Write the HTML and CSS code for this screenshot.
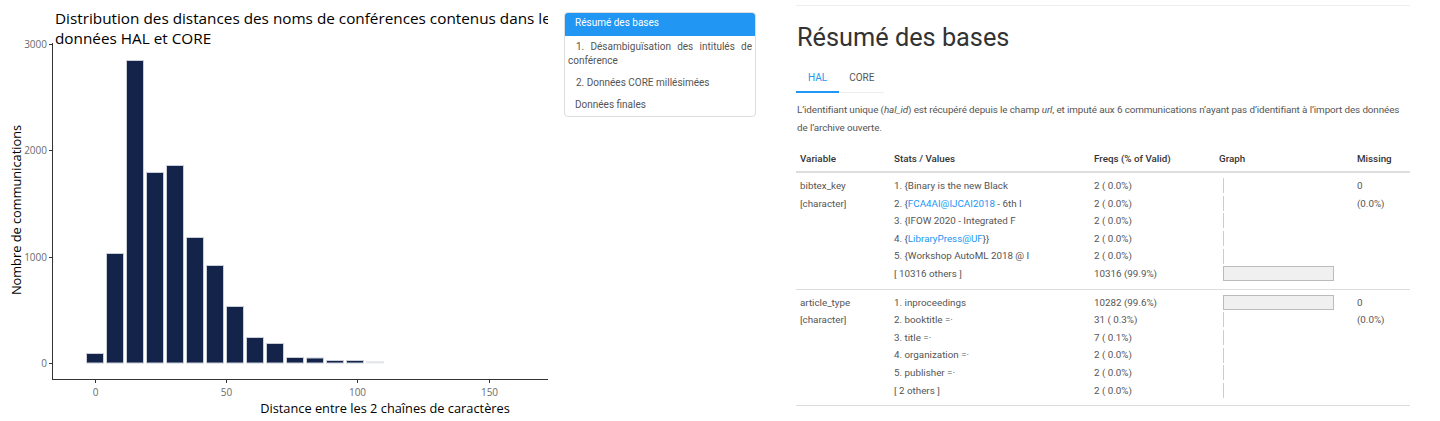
FILE: index.html
```html
<!DOCTYPE html>
<html lang="fr">
<head>
<meta charset="utf-8">
<title>Résumé des bases</title>
<link rel="stylesheet" href="styles.css">
</head>
<body>
<div class="page">
  <div class="figure">
    <svg class="chart" width="548" height="421" viewBox="0 0 548 421">
      <text class="title" x="55" y="24">Distribution des distances des noms de conférences contenus dans les</text>
      <text class="title" x="55" y="44">données HAL et CORE</text>
      <g class="bars">
        <rect x="86.5" y="353.5" width="17" height="9.5"/>
        <rect x="106.5" y="253.5" width="17" height="109.5"/>
        <rect x="126.5" y="60.5" width="17" height="302.5"/>
        <rect x="146.5" y="172.5" width="17" height="190.5"/>
        <rect x="166.5" y="165.5" width="17" height="197.5"/>
        <rect x="186.5" y="237.5" width="17" height="125.5"/>
        <rect x="206.5" y="265.5" width="17" height="97.5"/>
        <rect x="226.5" y="306.5" width="17" height="56.5"/>
        <rect x="246.5" y="337.5" width="17" height="25.5"/>
        <rect x="266.5" y="343.5" width="17" height="19.5"/>
        <rect x="286.5" y="357.5" width="17" height="5.5"/>
        <rect x="306.5" y="358" width="17" height="5"/>
        <rect x="326.5" y="360.5" width="17" height="2.5"/>
        <rect x="346.5" y="360.5" width="17" height="2.5"/>
        <rect class="faint" x="366.5" y="361.5" width="17" height="1.5"/>
      </g>
      <g class="axis">
        <line x1="52.5" y1="43" x2="52.5" y2="380"/>
        <line x1="52" y1="379.5" x2="548" y2="379.5"/>
        <line x1="49" y1="44.5" x2="52" y2="44.5"/>
        <line x1="49" y1="150.5" x2="52" y2="150.5"/>
        <line x1="49" y1="257.5" x2="52" y2="257.5"/>
        <line x1="49" y1="363.5" x2="52" y2="363.5"/>
        <line x1="95.5" y1="380" x2="95.5" y2="383"/>
        <line x1="226.5" y1="380" x2="226.5" y2="383"/>
        <line x1="357.5" y1="380" x2="357.5" y2="383"/>
        <line x1="489.5" y1="380" x2="489.5" y2="383"/>
      </g>
      <g class="ticks">
        <text x="47" y="48" text-anchor="end">3000</text>
        <text x="47" y="154" text-anchor="end">2000</text>
        <text x="47" y="261" text-anchor="end">1000</text>
        <text x="47" y="367" text-anchor="end">0</text>
        <text x="95.5" y="396" text-anchor="middle">0</text>
        <text x="226.5" y="396" text-anchor="middle">50</text>
        <text x="357.5" y="396" text-anchor="middle">100</text>
        <text x="489.5" y="396" text-anchor="middle">150</text>
      </g>
      <text class="axis-title" x="385" y="413" text-anchor="middle">Distance entre les 2 chaînes de caractères</text>
      <text class="axis-title" x="0" y="0" text-anchor="middle" transform="translate(21 210) rotate(-90)">Nombre de communications</text>
    </svg>
  </div>

  <nav class="toc">
    <div class="toc-item active">Résumé des bases</div>
    <div class="toc-item sub">1. Désambiguïsation des intitulés de conférence</div>
    <div class="toc-item sub">2. Données CORE millésimées</div>
    <div class="toc-item">Données finales</div>
  </nav>

  <main class="main">
    <h1 class="heading">Résumé des bases</h1>
    <ul class="tabs">
      <li class="tab active">HAL</li>
      <li class="tab">CORE</li>
    </ul>
    <p class="intro">L’identifiant unique (<em>hal_id</em>) est récupéré depuis le champ <em>url</em>, et imputé aux 6 communications n’ayant pas d’identifiant à l’import des données de l’archive ouverte.</p>
    <table class="summary">
      <thead>
        <tr>
          <th class="c-var">Variable</th>
          <th class="c-stats">Stats / Values</th>
          <th class="c-freq">Freqs (% of Valid)</th>
          <th class="c-graph">Graph</th>
          <th class="c-miss">Missing</th>
        </tr>
      </thead>
      <tbody>
        <tr>
          <td class="c-var"><div class="line">bibtex_key</div><div class="line">[character]</div></td>
          <td class="c-stats">
            <div class="line">1. {Binary is the new Black</div>
            <div class="line">2. {<a class="link">FCA4AI@IJCAI2018</a> - 6th I</div>
            <div class="line">3. {IFOW 2020 - Integrated F</div>
            <div class="line">4. {<a class="link">LibraryPress@UF</a>}}</div>
            <div class="line">5. {Workshop AutoML 2018 @ I</div>
            <div class="line">[ 10316 others ]</div>
          </td>
          <td class="c-freq">
            <div class="line">2 ( 0.0%)</div>
            <div class="line">2 ( 0.0%)</div>
            <div class="line">2 ( 0.0%)</div>
            <div class="line">2 ( 0.0%)</div>
            <div class="line">2 ( 0.0%)</div>
            <div class="line">10316 (99.9%)</div>
          </td>
          <td class="c-graph">
            <div class="bar-row"><span class="gbar"></span></div>
            <div class="bar-row"><span class="gbar"></span></div>
            <div class="bar-row"><span class="gbar"></span></div>
            <div class="bar-row"><span class="gbar"></span></div>
            <div class="bar-row"><span class="gbar"></span></div>
            <div class="bar-row"><span class="gbar full" style="width:111px"></span></div>
          </td>
          <td class="c-miss"><div class="line">0</div><div class="line">(0.0%)</div></td>
        </tr>
        <tr>
          <td class="c-var"><div class="line">article_type</div><div class="line">[character]</div></td>
          <td class="c-stats">
            <div class="line">1. inproceedings</div>
            <div class="line">2. booktitle =·</div>
            <div class="line">3. title =·</div>
            <div class="line">4. organization =·</div>
            <div class="line">5. publisher =·</div>
            <div class="line">[ 2 others ]</div>
          </td>
          <td class="c-freq">
            <div class="line">10282 (99.6%)</div>
            <div class="line">31 ( 0.3%)</div>
            <div class="line">7 ( 0.1%)</div>
            <div class="line">2 ( 0.0%)</div>
            <div class="line">2 ( 0.0%)</div>
            <div class="line">2 ( 0.0%)</div>
          </td>
          <td class="c-graph">
            <div class="bar-row"><span class="gbar full" style="width:111px"></span></div>
            <div class="bar-row"><span class="gbar"></span></div>
            <div class="bar-row"><span class="gbar"></span></div>
            <div class="bar-row"><span class="gbar"></span></div>
            <div class="bar-row"><span class="gbar"></span></div>
            <div class="bar-row"><span class="gbar"></span></div>
          </td>
          <td class="c-miss"><div class="line">0</div><div class="line">(0.0%)</div></td>
        </tr>
      </tbody>
    </table>
  </main>
</div>
</body>
</html>
```

FILE: styles.css
```css
html, body {
  margin: 0;
  padding: 0;
  background: #ffffff;
}

.page {
  display: flex;
  align-items: flex-start;
  width: 1440px;
  height: 421px;
  overflow: hidden;
}

.figure {
  flex: 0 0 548px;
  width: 548px;
  height: 421px;
  overflow: hidden;
}

.chart {
  display: block;
  font-family: "Open Sans", "Noto Sans", sans-serif;
}

.chart .title {
  font-size: 15.3px;
  fill: #000000;
}

.chart .bars rect {
  fill: #13234a;
  stroke: #c9ced8;
  stroke-width: 1;
}

.chart .bars rect.faint {
  fill: #e6e8ee;
  stroke: #e6e8ee;
}

.chart .axis line {
  stroke: #333333;
  stroke-width: 1;
}

.chart .ticks text {
  font-size: 10px;
  fill: #6b6b6b;
}

.chart .axis-title {
  font-size: 12.8px;
  fill: #000000;
}

.toc {
  flex: 0 0 192px;
  width: 192px;
  margin: 12px 0 0 16px;
  border: 1px solid #dddddd;
  border-radius: 4px;
  overflow: hidden;
  font-family: Roboto, "Liberation Sans", sans-serif;
  font-size: 10px;
  color: #555555;
  box-sizing: border-box;
}

.toc-item {
  padding: 4px 3px 4px 10px;
  line-height: 14px;
}

.toc-item.active {
  background: #2196f3;
  color: #ffffff;
  padding-top: 3px;
  padding-bottom: 6px;
}

.toc-item.sub {
  padding-left: 3px;
  text-indent: 8px;
  text-align: justify;
}

.main {
  flex: 0 0 614px;
  width: 614px;
  margin-left: 40px;
  border-top: 1px solid #eeeeee;
  margin-top: 5px;
  font-family: Roboto, "Liberation Sans", sans-serif;
  color: #555555;
}

.heading {
  margin: 16px 0 0 1px;
  font-size: 25.3px;
  font-weight: 400;
  line-height: 31px;
  color: #333333;
}

.tabs {
  display: flex;
  list-style: none;
  margin: 12px 0 0 0;
  padding: 0;
  width: 88px;
  border-bottom: 1px solid #eeeeee;
}

.tab {
  font-size: 10px;
  line-height: 14px;
  padding: 6px 11px 7px 10px;
  color: #555555;
}

.tab.active {
  color: #2196f3;
  border-bottom: 2px solid #2196f3;
  margin-bottom: -1px;
  padding: 6px 12px 6px 12px;
}

.intro {
  margin: 8px 0 0 1px;
  font-size: 9.85px;
  line-height: 18px;
  letter-spacing: -0.1px;
}

.intro em {
  font-style: italic;
}

.summary {
  width: 614px;
  margin-top: 10px;
  border-collapse: collapse;
  font-size: 9.8px;
  color: #555555;
}

.summary th {
  text-align: left;
  font-weight: 500;
  color: #333333;
  padding: 5px 4px 5px 4px;
  line-height: 14px;
  border-bottom: 2px solid #dddddd;
}

.summary td {
  vertical-align: top;
  padding: 4px 4px 6px 4px;
  border-bottom: 1px solid #dddddd;
}

.c-var { width: 86px; }
.c-stats { width: 192px; }
.c-freq { width: 117px; }
.c-graph { width: 130px; }

.line {
  height: 17.6px;
  line-height: 17.6px;
  white-space: nowrap;
}

.link {
  color: #2196f3;
  text-decoration: none;
}

.bar-row {
  height: 17.6px;
  display: flex;
  align-items: center;
  padding-left: 4px;
}

.gbar {
  display: block;
  width: 0;
  height: 15px;
  box-sizing: border-box;
  border-left: 1px solid #cccccc;
}

.gbar.full {
  background: #f0f0f0;
  border: 1px solid #bbbbbb;
}
```
